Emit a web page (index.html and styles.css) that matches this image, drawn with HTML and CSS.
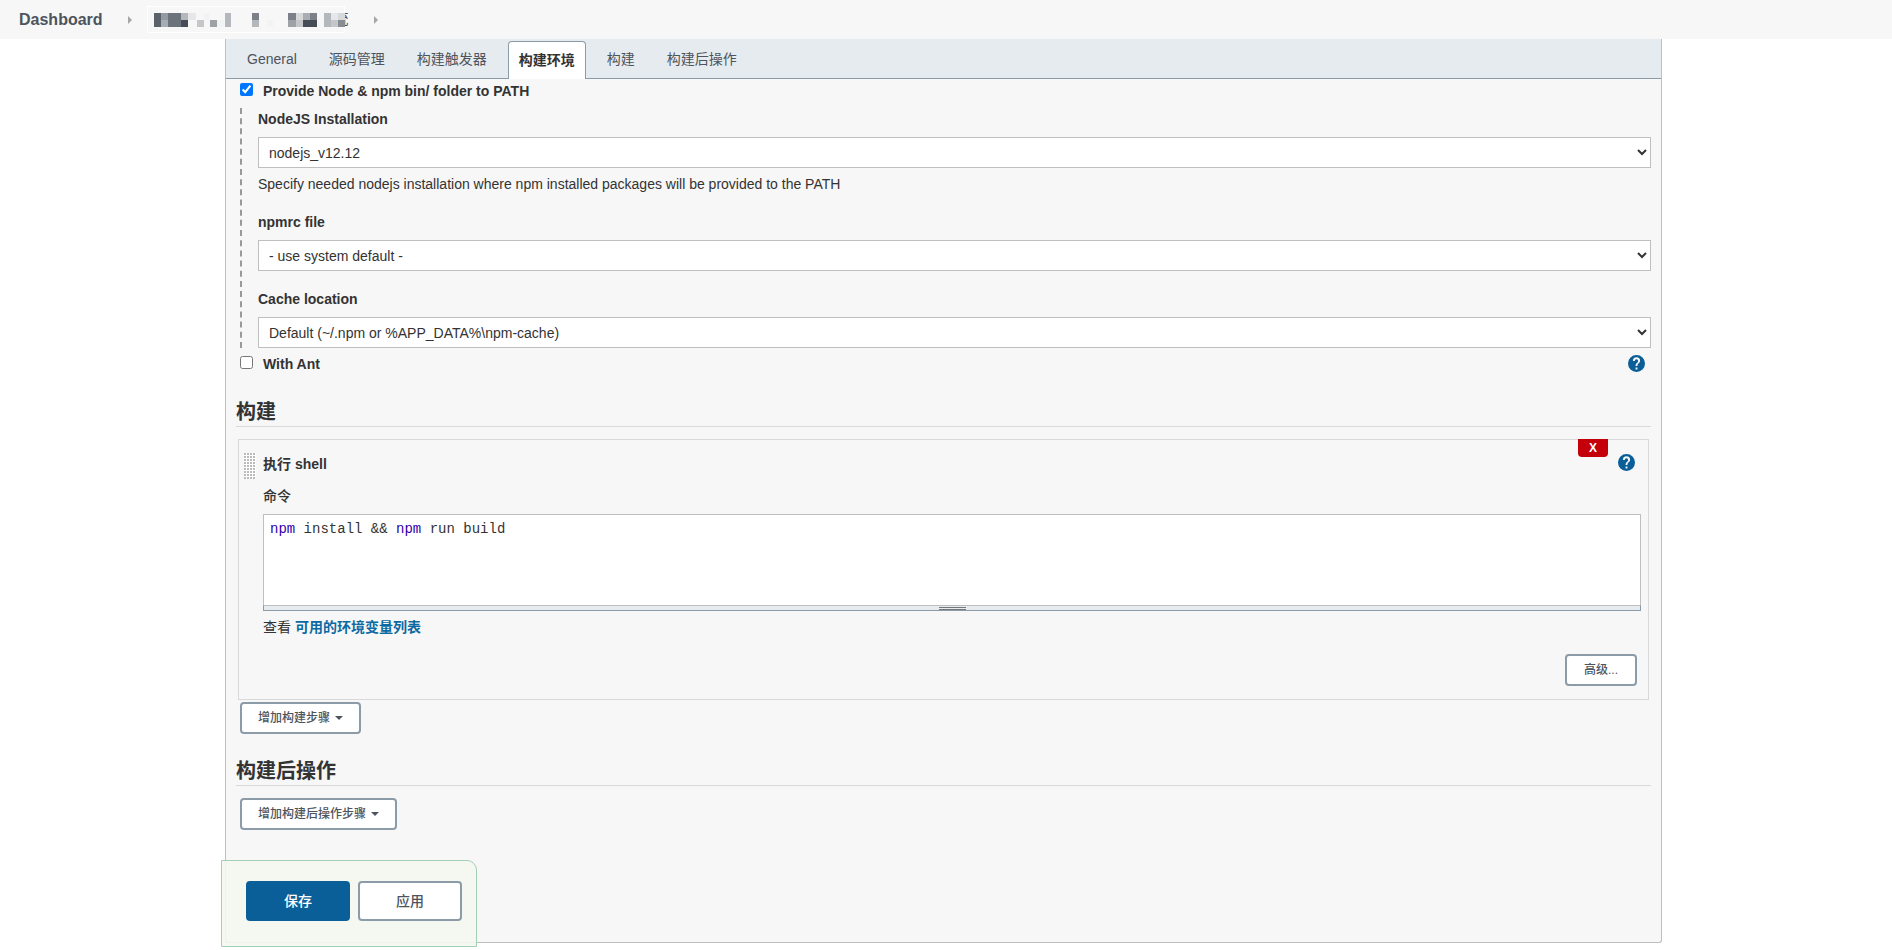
FILE: index.html
```html
<!DOCTYPE html>
<html lang="zh-CN">
<head>
<meta charset="utf-8">
<title>构建环境 - Config</title>
<link rel="stylesheet" href="styles.css">
</head>
<body>
<nav class="breadcrumbs" aria-label="Breadcrumb">
  <a class="crumb" href="#">Dashboard</a>
  <svg class="sep" viewBox="0 0 4 8" aria-hidden="true"><path d="M0 0l4 4-4 4z"/></svg>
  <a class="masked" href="#">
    <svg class="mosaic" viewBox="0 0 198 27" shape-rendering="crispEdges" aria-hidden="true">
      <path fill="#fff" d="M0 0h198v27H0z"/><path fill="#f7f7f7" d="M1 1h196v25H1z"/>
      <path fill="#5c626b" d="M7 7h7v14H7z"/><path fill="#949aa2" d="M14 7h7v7h-7z"/><path fill="#a9adb3" d="M14 14h7v7h-7z"/><path fill="#6d737b" d="M21 7h13v14H21z"/><path fill="#b4b7bc" d="M34 7h7v7h-7z"/><path fill="#464d56" d="M34 14h7v7h-7zM156 14h14v7h-14z"/>
      <path fill="#e6e7e8" d="M41 7h8v7h-8zM184 7h7v7h-7z"/><path fill="#f3f3f3" d="M57 7h6v7h-6zM70 14h7v7h-7zM120 14h6v7h-6z"/><path fill="#c4c6ca" d="M50 14h7v7h-7zM149 14h7v7h-7zM184 14h7v7h-7z"/><path fill="#9ea1a6" d="M63 14h7v7h-7zM141 14h8v7h-8z"/>
      <path fill="#b4b7bc" d="M78 7h6v14h-6zM105 14h7v7h-7zM177 7h7v14h-7z"/><path fill="#7c8088" d="M105 7h7v7h-7zM141 7h8v7h-8zM163 7h7v7h-7z"/><path fill="#d6d8da" d="M149 7h7v7h-7zM191 7h7v7h-7z"/><path fill="#a9adb3" d="M156 7h7v7h-7z"/><path fill="#888d94" d="M191 14h7v7h-7z"/>
    </svg>
    <span class="masked-tail">统</span>
  </a>
  <svg class="sep" viewBox="0 0 4 8" aria-hidden="true"><path d="M0 0l4 4-4 4z"/></svg>
</nav>

<main class="page">
  <form class="panel">
    <div class="tabs">
      <a class="tab" href="#">General</a>
      <a class="tab" href="#">源码管理</a>
      <a class="tab" href="#">构建触发器</a>
      <a class="tab active" href="#">构建环境</a>
      <a class="tab" href="#">构建</a>
      <a class="tab" href="#">构建后操作</a>
    </div>
    <div class="content">
      <label class="check"><input type="checkbox" checked>Provide Node &amp; npm bin/ folder to PATH</label>
      <div class="nested">
        <svg class="dashes" aria-hidden="true"><line x1="1" y1="0" x2="1" y2="100%"/></svg>
        <div class="fields">
          <div class="field">
            <label for="node">NodeJS Installation</label>
            <select id="node"><option>nodejs_v12.12</option></select>
            <p class="hint">Specify needed nodejs installation where npm installed packages will be provided to the PATH</p>
          </div>
          <div class="field">
            <label for="npmrc">npmrc file</label>
            <select id="npmrc"><option>- use system default -</option></select>
          </div>
          <div class="field">
            <label for="cache">Cache location</label>
            <select id="cache"><option>Default (~/.npm or %APP_DATA%\npm-cache)</option></select>
          </div>
        </div>
      </div>
      <div class="row">
        <label class="check"><input type="checkbox">With Ant</label>
        <a class="help" href="#" aria-label="Help"><svg viewBox="0 0 24 24"><path d="M12 0a12 12 0 1 0 0 24 12 12 0 0 0 0-24zm1.300 20.300h-2.600v-2.600h2.600zm2.500-9.300l-1.100 1.100c-.9.900-1.400 1.700-1.400 3.600h-2.600v-.7c0-1.300.5-2.500 1.400-3.400l1.500-1.500c.5-.4.700-1 .7-1.700a2.400 2.400 0 0 0-4.800 0H6.900a5.100 5.100 0 0 1 10.200 0c0 1-.5 2-1.300 2.600z"/></svg></a>
      </div>

      <h2 class="section">构建</h2>
      <section class="step">
        <span class="grip"></span>
        <div class="step-body">
          <div class="step-head">
            <strong>执行 shell</strong>
            <button class="remove" type="button">X</button>
            <a class="help" href="#" aria-label="Help"><svg viewBox="0 0 24 24"><path d="M12 0a12 12 0 1 0 0 24 12 12 0 0 0 0-24zm1.300 20.300h-2.600v-2.600h2.600zm2.500-9.300l-1.100 1.100c-.9.900-1.400 1.700-1.400 3.600h-2.600v-.7c0-1.300.5-2.500 1.400-3.400l1.500-1.500c.5-.4.700-1 .7-1.700a2.400 2.400 0 0 0-4.800 0H6.900a5.100 5.100 0 0 1 10.200 0c0 1-.5 2-1.300 2.600z"/></svg></a>
          </div>
          <div class="command-label" id="command">命令</div>
          <div class="editor">
            <pre class="code" contenteditable="true" spellcheck="false" role="textbox" aria-labelledby="command"><b>npm</b> install &amp;&amp; <b>npm</b> run build</pre>
            <div class="resizer"><span></span></div>
          </div>
          <p class="see">查看 <a href="#">可用的环境变量列表</a></p>
          <div class="actions"><button class="btn" type="button">高级...</button></div>
        </div>
      </section>
      <button class="btn" type="button">增加构建步骤<svg class="caret" viewBox="0 0 8 4"><path d="M0 0h8L4 4z"/></svg></button>

      <h2 class="section">构建后操作</h2>
      <button class="btn post" type="button">增加构建后操作步骤<svg class="caret" viewBox="0 0 8 4"><path d="M0 0h8L4 4z"/></svg></button>

      <div class="bottom">
        <button class="big primary" type="submit">保存</button>
        <button class="big" type="button">应用</button>
      </div>
    </div>
  </form>
</main>
</body>
</html>
```
FILE: styles.css
```css
* { box-sizing: border-box; }
body {
  margin: 0;
  background: #fff;
  color: #333;
  font: 14px/20px "Liberation Sans", "Noto Sans CJK SC", sans-serif;
}
a { text-decoration: none; color: #0b6aa2; }
p, h2, pre { margin: 0; }

.breadcrumbs {
  display: flex;
  align-items: center;
  height: 39px;
  padding-left: 19px;
  background: #f7f7f7;
}
.crumb { color: #4d545d; font-size: 16px; font-weight: bold; }
.sep { width: 4px; height: 8px; margin-left: 25px; fill: #a6a6a6; }
.masked { position: relative; display: flex; width: 202px; margin-left: 15px; color: #4d545d; }
.mosaic { position: relative; z-index: 1; flex: none; width: 198px; height: 27px; }
.masked-tail { position: absolute; right: 0; top: 3px; font-size: 15px; }

.page { padding: 0 230px 8px 225px; }
.panel {
  border: solid #bfbfbf;
  border-width: 0 1px 1px;
  border-radius: 0 0 3px 3px;
  background: #f7f7f7;
}
.tabs {
  display: flex;
  align-items: flex-end;
  height: 40px;
  padding: 2px 10px 0;
  border-bottom: 1px solid #8c9ba8;
  background: #e6ebef;
}
.tab {
  height: 37px;
  padding: 0 10px;
  border: 1px solid transparent;
  color: #4d545d;
  line-height: 34px;
  margin-right: 10px;
}
.tab.active {
  height: 38px;
  margin-bottom: -1px;
  border-color: #8c9ba8;
  border-bottom: 0;
  border-radius: 4px 4px 0 0;
  background: #fff;
  color: #333;
  line-height: 36px;
  font-weight: bold;
}

.content { padding: 2px 10px 31px; }
.check { display: flex; align-items: center; padding-left: 4px; font-weight: bold; }
.check input { width: 13px; height: 13px; margin: 0 10px 4px 0; }
.nested { display: flex; margin: 7px 0 0 4px; }
.dashes { flex: none; width: 2px; height: 240px; }
.dashes line { stroke: #999; stroke-width: 2; stroke-dasharray: 6 4.17; }
.fields { flex: 1; display: flex; flex-direction: column; gap: 18px; padding: 1px 0 0 16px; }
.field label { display: block; margin-bottom: 8px; font-weight: bold; }
select {
  display: block;
  width: 100%;
  height: 31px;
  padding: 0 6px;
  border: 1px solid #bfbfbf;
  border-radius: 0;
  background-color: #fff;
  color: #333;
  font: inherit;
}
.hint { margin-top: 6px; }
.row { display: flex; align-items: center; justify-content: space-between; margin-top: 6px; padding-right: 6px; }
.row .help { padding-bottom: 2px; }
.help svg { display: block; width: 17px; height: 17px; fill: #0b5f99; }

.section {
  margin-top: 24px;
  border-bottom: 1px solid #d9d9d9;
  font-size: 20px;
  line-height: 28px;
}
.step {
  display: flex;
  gap: 7px;
  margin: 12px 2px 2px;
  padding: 0 7px 13px 5px;
  border: 1px solid #d9d9d9;
}
.grip {
  width: 12px;
  height: 26px;
  margin-top: 13px;
  background: radial-gradient(circle at 1px 1px, #bbb 1px, #fff 1px) 0 0 / 3px 3px;
}
.step-body { flex: 1; }
.step-head { display: flex; align-items: flex-start; height: 34px; padding-right: 6px; }
.step-head strong { flex: 1; margin-top: 14px; }
.remove {
  width: 30px;
  height: 18px;
  margin: -1px 10px 0 0;
  padding: 0;
  border: 0;
  border-radius: 0 0 4px 4px;
  background: #c4000a;
  color: #fff;
  font: bold 12px/18px "Liberation Sans", sans-serif;
}
.step-head .help { margin-top: 14px; }
.command-label { margin: 12px 0 8px; font-weight: 500; }
.editor { border: 1px solid #bfbfbf; border-bottom: 0; background: #fff; }
.code { height: 90px; padding: 5px 6px; font: 14px/18px "Liberation Mono", monospace; outline: 0; }
.code b { color: #30a; font-weight: normal; }
.resizer {
  display: flex;
  justify-content: center;
  align-items: flex-end;
  height: 6px;
  margin: 0 -1px;
  border: 1px solid #8c9ba8;
  border-top-color: #bfbfbf;
  background: #e6ebef;
}
.resizer span { width: 27px; height: 3px; border: solid #777; border-width: 1px 0; }
.see { margin-top: 6px; }
.see a { font-weight: bold; }
.actions { display: flex; justify-content: flex-end; margin-top: 17px; padding-right: 4px; }
.btn {
  display: flex;
  align-items: center;
  justify-content: center;
  width: fit-content;
  min-width: 72px;
  height: 32px;
  margin-left: 4px;
  padding: 0 16px;
  border: 2px solid #8c9ba8;
  border-radius: 4px;
  background: #fff;
  color: #4d545d;
  font: 500 12px/16px "Liberation Sans", "Noto Sans CJK SC", sans-serif;
}
.caret { width: 8px; height: 4px; margin-left: 5px; fill: #4d545d; }
.btn + .section { margin-top: 23px; }
.post { margin-top: 12px; }

.bottom {
  display: flex;
  gap: 8px;
  width: 256px;
  margin: 30px 0 -36px -15px;
  padding: 20px 14px 25px 24px;
  border: 1px solid #a3cfb4;
  border-radius: 0 10px 0 0;
  background: rgba(243, 247, 239, .9);
}
.big {
  flex: 1;
  height: 40px;
  border: 2px solid #8c9ba8;
  border-radius: 4px;
  background: #fff;
  color: #4d545d;
  font: 500 14px/20px "Liberation Sans", "Noto Sans CJK SC", sans-serif;
}
.primary { border-color: #0b5f99; background: #0b5f99; color: #fff; }
```
